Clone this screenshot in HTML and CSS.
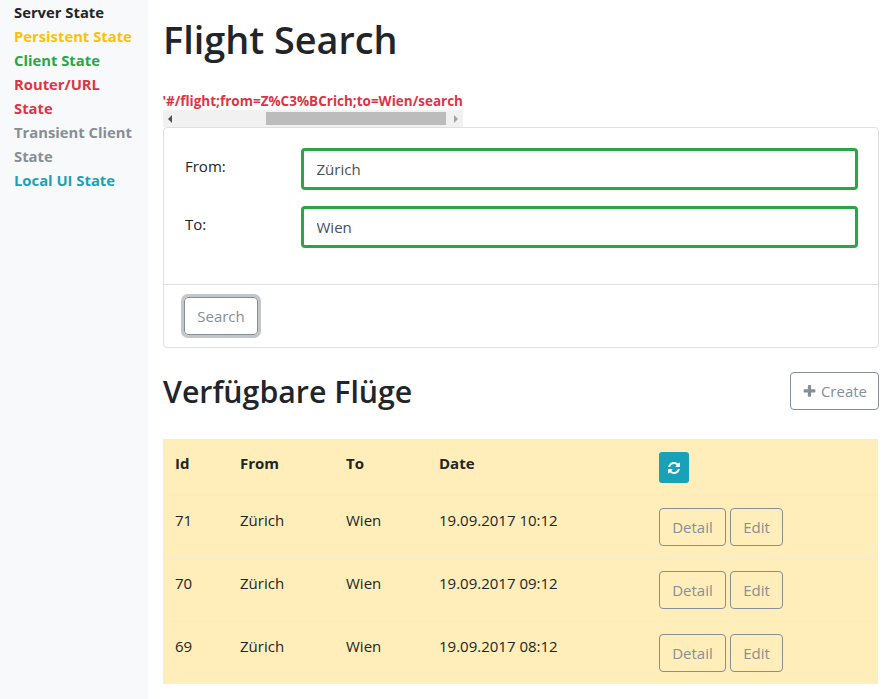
FILE: index.html
```html
<!DOCTYPE html>
<html lang="en">
<head>
	<meta charset="UTF-8">
	<title>Flight Search</title>
	<link rel="stylesheet" href="styles.css">
</head>
<body>
	<aside class="sidebar">
		<ul class="states">
			<li class="dark">Server State</li>
			<li class="warning">Persistent State</li>
			<li class="success">Client State</li>
			<li class="danger">Router/URL State</li>
			<li class="secondary">Transient Client State</li>
			<li class="info">Local UI State</li>
		</ul>
	</aside>
	<main class="content">
		<h1>Flight Search</h1>
		<div class="route">
			<div class="route-text">'#/flight;from=Z%C3%BCrich;to=Wien/search</div>
			<div class="scrollbar">
				<span class="arrow arrow-left"></span>
				<span class="track"><span class="thumb"></span></span>
				<span class="arrow arrow-right"></span>
			</div>
		</div>
		<form class="card">
			<div class="card-body">
				<div class="form-row">
					<label>From:</label>
					<input class="form-input" type="text" value="Zürich">
				</div>
				<div class="form-row">
					<label>To:</label>
					<input class="form-input" type="text" value="Wien">
				</div>
			</div>
			<div class="card-footer">
				<button class="btn btn-focus" type="button">Search</button>
			</div>
		</form>
		<div class="section-head">
			<h2>Verfügbare Flüge</h2>
			<button class="btn btn-create" type="button">
				<svg class="icon-plus" viewBox="0 0 1792 1792"><path d="M1600 736v192q0 40-28 68t-68 28h-416v416q0 40-28 68t-68 28h-192q-40 0-68-28t-28-68v-416h-416q-40 0-68-28t-28-68v-192q0-40 28-68t68-28h416v-416q0-40 28-68t68-28h192q40 0 68 28t28 68v416h416q40 0 68 28t28 68z"/></svg>
				Create
			</button>
		</div>
		<table class="flights">
			<thead>
				<tr>
					<th class="col-id">Id</th>
					<th class="col-from">From</th>
					<th class="col-to">To</th>
					<th class="col-date">Date</th>
					<th>
						<button class="btn-refresh" type="button">
							<svg class="icon-refresh" viewBox="0 0 1792 1792"><path d="M1639 1056q0 5-1 7-64 268-268 434.5t-478 166.5q-146 0-282.5-55t-243.5-157l-129 129q-19 19-45 19t-45-19-19-45v-448q0-26 19-45t45-19h448q26 0 45 19t19 45-19 45l-137 137q71 66 161 102t187 36q134 0 250-65t186-179q11-17 53-117 8-23 30-23h192q13 0 22.5 9.5t9.5 22.5zm25-800v448q0 26-19 45t-45 19h-448q-26 0-45-19t-19-45 19-45l138-138q-148-137-349-137-134 0-250 65t-186 179q-11 17-53 117-8 23-30 23h-199q-13 0-22.5-9.5t-9.5-22.5v-7q65-268 270-434.5t480-166.5q146 0 284 55.5t245 156.5l130-129q19-19 45-19t45 19 19 45z"/></svg>
						</button>
					</th>
				</tr>
			</thead>
			<tbody>
				<tr>
					<td>71</td>
					<td>Zürich</td>
					<td>Wien</td>
					<td>19.09.2017 10:12</td>
					<td class="actions"><button class="btn btn-detail" type="button">Detail</button><button class="btn btn-edit" type="button">Edit</button></td>
				</tr>
				<tr>
					<td>70</td>
					<td>Zürich</td>
					<td>Wien</td>
					<td>19.09.2017 09:12</td>
					<td class="actions"><button class="btn btn-detail" type="button">Detail</button><button class="btn btn-edit" type="button">Edit</button></td>
				</tr>
				<tr>
					<td>69</td>
					<td>Zürich</td>
					<td>Wien</td>
					<td>19.09.2017 08:12</td>
					<td class="actions"><button class="btn btn-detail" type="button">Detail</button><button class="btn btn-edit" type="button">Edit</button></td>
				</tr>
			</tbody>
		</table>
	</main>
</body>
</html>
```

FILE: styles.css
```css
html, body, h1, h2, ul, li {
	margin: 0;
	padding: 0;
}
ul {
	list-style: none;
}
body {
	display: flex;
	min-height: 699px;
	background: #fff;
	color: #212529;
	font-family: "Open Sans", "Noto Sans", sans-serif;
	font-size: 15px;
	line-height: 24px;
}

/* sidebar */
.sidebar {
	flex: 0 0 148px;
	background: #f8f9fa;
	padding: 0 14px;
	box-sizing: border-box;
}
.states li {
	font-weight: 700;
	font-size: 14.8px;
}
.dark { color: #212529; }
.warning { color: #ffc107; }
.success { color: #28a745; }
.danger { color: #dc3545; }
.secondary { color: #868e96; }
.info { color: #17a2b8; }

/* main column */
.content {
	flex: 1;
	min-width: 0;
	padding: 0 13px 0 15px;
}
h1 {
	font-size: 37.8px;
	font-weight: 600;
	line-height: 44px;
	padding-top: 18px;
	margin-bottom: 28px;
}

/* route with a scrollbar */
.route {
	width: 300px;
}
.route-text {
	display: flex;
	justify-content: flex-end;
	height: 20px;
	overflow: hidden;
	color: #dc3545;
	font-size: 13.5px;
	font-weight: 700;
	line-height: 22px;
	white-space: nowrap;
}
.scrollbar {
	display: flex;
	align-items: center;
	height: 17px;
	background: #f1f1f1;
}
.arrow {
	height: 0;
	border: 4px solid transparent;
	box-sizing: border-box;
}
.arrow-left {
	flex: 0 0 0;
	margin: 0 4px 0 5px;
	border-left-width: 0;
	border-right-color: #505050;
}
.arrow-right {
	flex: 0 0 0;
	margin: 0 5px 0 4px;
	border-right-width: 0;
	border-left-color: #a3a3a3;
}
.track {
	flex: 1;
	padding-left: 90px;
}
.thumb {
	display: block;
	width: 180px;
	height: 13px;
	background: #bcbcbc;
}

/* form card */
.card {
	border: 1px solid #dfdfdf;
	border-radius: 4px;
}
.card-body {
	padding: 20px 20px 20px 21px;
}
.form-row {
	display: grid;
	grid-template-columns: 116px 1fr;
	margin-bottom: 16px;
}
.form-row label {
	padding-top: 6px;
}
.form-input {
	height: 42px;
	box-sizing: border-box;
	width: 100%;
	padding: 0 13px 0 12.5px;
	border: 3px solid #28a745;
	border-radius: 4px;
	color: #495057;
	font: inherit;
	outline: none;
}
.card-footer {
	border-top: 1px solid #dfdfdf;
	padding: 12px 20px;
}

.btn {
	height: 38px;
	padding: 0;
	border: 1px solid #868e96;
	border-radius: 4px;
	background: transparent;
	color: #868e96;
	font: inherit;
	vertical-align: top;
}
.btn-focus {
	display: block;
	width: 74px;
	box-shadow: 0 0 0 3px rgba(134, 142, 150, 0.5);
}
.btn-detail {
	width: 67px;
}
.btn-edit {
	width: 53px;
	margin-left: 4px;
}

/* heading row */
.section-head {
	display: flex;
	justify-content: space-between;
	align-items: center;
	height: 38px;
	margin-top: 24px;
	margin-bottom: 29px;
}
h2 {
	font-size: 30.3px;
	font-weight: 600;
	line-height: 38px;
	margin-top: 2px;
}
.btn-create {
	width: 89px;
}
.icon-plus {
	width: 15px;
	height: 15px;
	fill: #868e96;
	vertical-align: -2px;
}

/* table */
.flights {
	width: calc(100% - 1px);
	border-collapse: collapse;
	background: #ffeeba;
}
.flights th,
.flights td {
	padding: 12px;
	text-align: left;
	vertical-align: top;
	border-top: 1px solid #f5ecd0;
}
.flights th {
	font-weight: 700;
	line-height: 22px;
}
.col-id { width: 41px; }
.col-from { width: 82px; }
.col-to { width: 69px; }
.col-date { width: 196px; }
.btn-refresh {
	display: block;
	width: 30px;
	height: 31px;
	padding: 0;
	border: 0;
	border-radius: 3px;
	background: #17a2b8;
}
.icon-refresh {
	display: block;
	width: 14px;
	height: 14px;
	margin: 0 auto;
	fill: #fff;
}
```
